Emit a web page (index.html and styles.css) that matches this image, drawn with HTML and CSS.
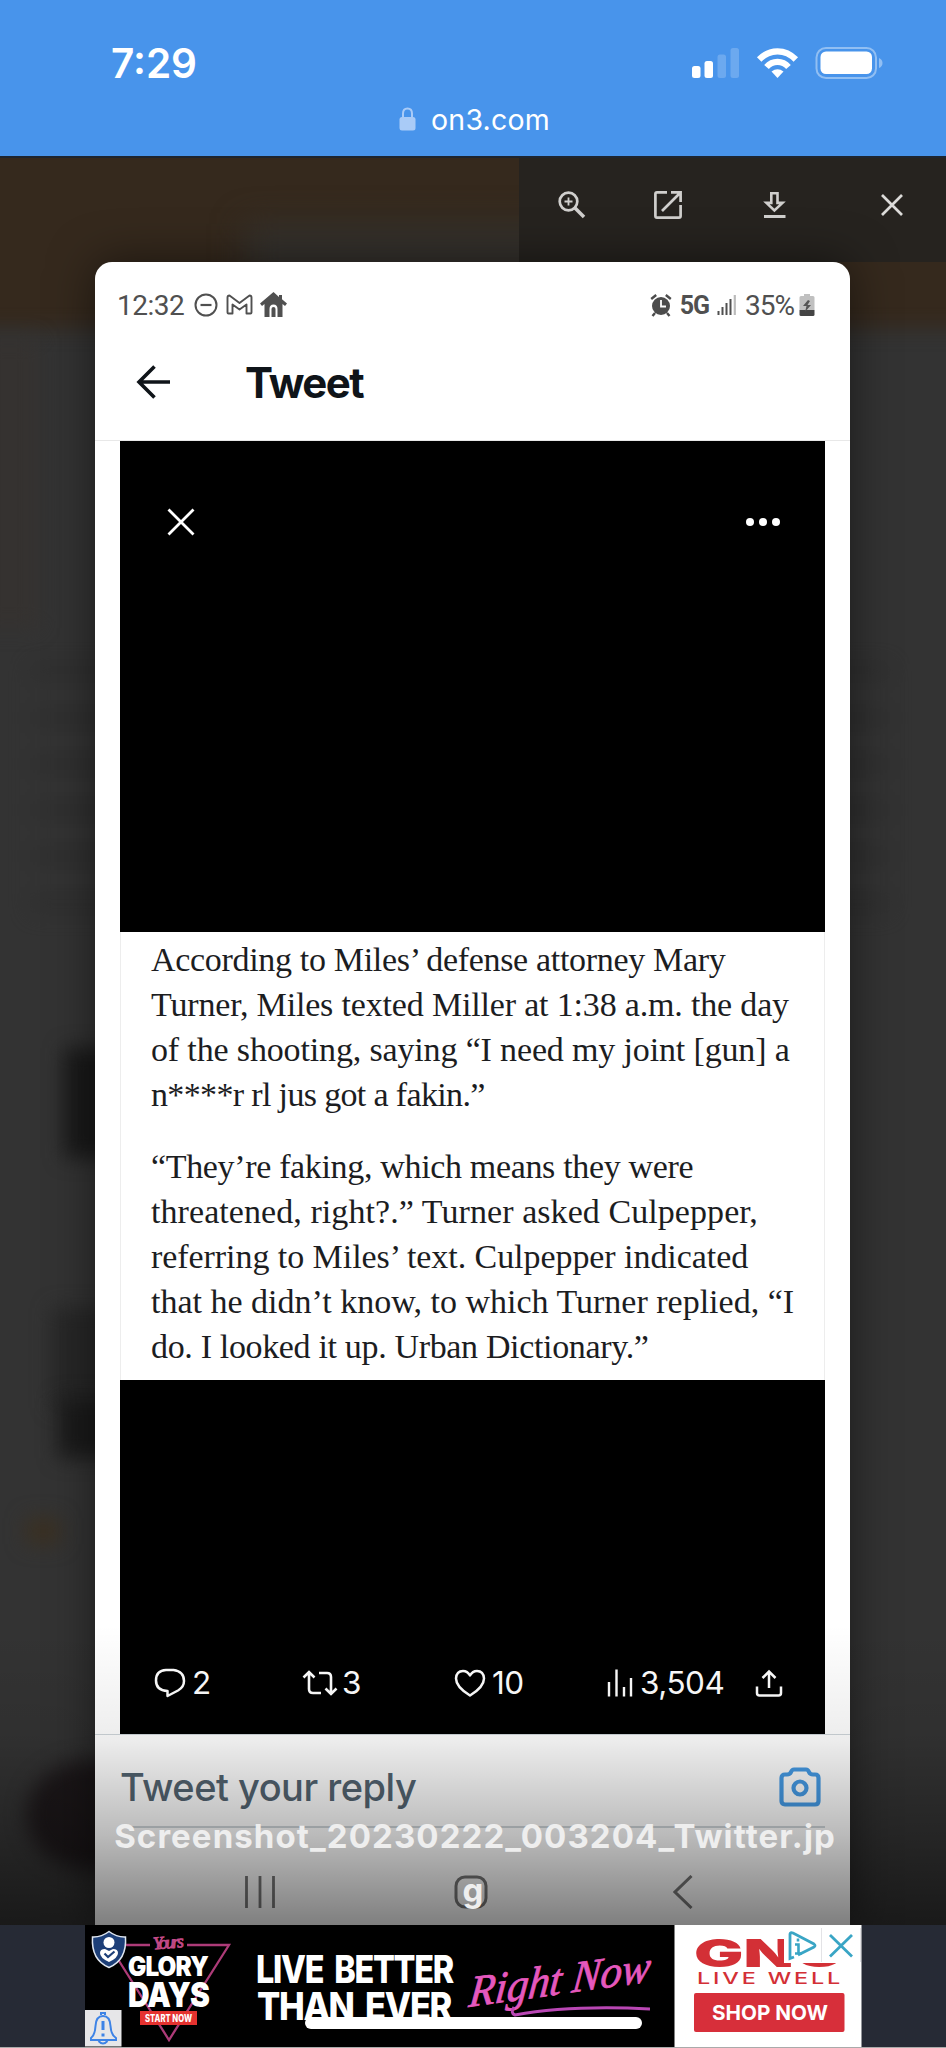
FILE: index.html
```
<!DOCTYPE html>
<html lang="en">
<head>
<meta charset="utf-8">
<title>on3.com</title>
<link rel="stylesheet" href="styles.css">
</head>
<body>
<div class="screen">
  <header class="browser">
    <div class="status">
      <span class="clock">7:29</span>
      <svg class="status-icons" width="192" height="32" viewBox="0 0 192 32">
        <g fill="#fff">
          <rect x="1" y="19" width="8.5" height="12" rx="2.5"/>
          <rect x="13.5" y="14" width="8.5" height="17" rx="2.5"/>
          <rect x="26.500" y="7.500" width="8.500" height="23.500" rx="2.500" opacity=".2"/>
          <rect x="39.500" y="1" width="8.500" height="30" rx="2.500" opacity=".2"/>
          <rect x="129.500" y="4.500" width="51.500" height="22.500" rx="5.500"/>
          <path d="M188 11v10q3.500-1.500 3.500-5t-3.500-5z" opacity=".4"/>
        </g>
        <rect x="125.500" y="1" width="59.500" height="30" rx="9.500" fill="none" stroke="#fff" stroke-width="2" opacity=".4"/>
        <g fill="none" stroke="#fff" stroke-width="6.200">
          <path d="M68.200 12.500Q76 4.300 86.500 4.300T104.800 12.500"/>
          <path d="M75.500 20Q80 14.900 86.500 14.900T97.500 20"/>
        </g>
        <path d="M80.500 24.500q6-4.500 12 0l-6 6.500z" fill="#fff"/>
      </svg>
    </div>
    <div class="address">
      <svg width="17" height="24" viewBox="0 0 17 24"><path d="M4 11V6.500Q4 1.500 8.500 1.500T13 6.500V11" fill="none" stroke="#a9cbf7" stroke-width="2"/><rect x="0.500" y="10" width="16" height="13.500" rx="2.500" fill="#a9cbf7"/></svg>
      <span>on3.com</span>
    </div>
  </header>

  <main class="page">
    <div class="backdrop">
      <i class="blot band"></i><i class="blot title-blot"></i>
      <i class="blot side"></i>
      <i class="blot thumb-a"></i><i class="blot thumb-b"></i><i class="blot thumb-c"></i>
      <i class="blot gold"></i><i class="blot avatar"></i>
      <i class="blot words"></i>
    </div>

    <nav class="toolbar">
      <svg width="28" height="28" viewBox="0 0 28 28" fill="none" stroke="#d0cfcd"><circle cx="10.500" cy="10.500" r="8.800" stroke-width="2.700"/><path d="M17 17l9 9" stroke-width="3.600"/><path d="M10.500 6.500v8M6.500 10.500h8" stroke-width="1.800"/></svg>
      <svg width="30" height="30" viewBox="0 0 30 30" fill="none" stroke="#d0cfcd" stroke-width="2.700"><path d="M14 2.400H4Q2.400 2.400 2.400 4V26Q2.400 27.600 4 27.600H26Q27.600 27.600 27.600 26V15"/><path d="M18 2.400h9.600V12M27 3L9 21"/></svg>
      <svg width="23" height="28" viewBox="0 0 23 28" fill="none" stroke="#d0cfcd"><path d="M8.300 2.300h6.200v9.600h5L11.400 19.500 3.400 11.900h4.900z" stroke-width="2.600"/><path d="M1 25.500h21.500" stroke-width="3"/></svg>
      <svg width="22" height="22" viewBox="0 0 22 22" fill="none" stroke="#dcdbd9" stroke-width="2.700"><path d="M1 1l20 20M21 1L1 21"/></svg>
    </nav>

    <article class="card">
      <div class="phone-status">
        <div class="group">
          <span class="ptime">12:32</span>
          <svg width="94" height="28" viewBox="0 0 94 28" fill="none" stroke="#505050">
            <circle cx="13" cy="14" r="10.500" stroke-width="2"/><path d="M7.500 14h11" stroke-width="2.200"/>
            <path d="M34.500 21.500V6.500q0-2 2-2L46.500 12l10-7.500q2 0 2 2V21.500q0 1-1 1h-4V13.500L46.500 18.500 39.500 13.500v9h-4q-1 0-1-1z" stroke-width="1.900" stroke-linejoin="round"/>
            <path d="M80.500 1L67 12.500l2 2.500 2.500-2V26h5V18q0-4.500 4-4.500t4 4.500v8h5V13l2.500 2 2-2.500-5-4.300V4h-3v2z" fill="#505050" stroke="none"/><path d="M78.500 26v-8q0-2 2-2t2 2v8z" fill="#505050" stroke="none"/>
          </svg>
        </div>
        <div class="group right-group">
          <svg width="22" height="24" viewBox="0 0 22 24"><circle cx="11" cy="13" r="9" fill="#4c4c4c"/><path d="M11 7v6.500h5" fill="none" stroke="#fff" stroke-width="1.800"/><path d="M1.200 6l5-4M20.800 6l-5-4M5 20l-2.500 3M17 20l2.500 3" stroke="#4c4c4c" stroke-width="2.400"/></svg>
          <b>5G</b>
          <svg class="sig" width="20" height="22" viewBox="0 0 20 22"><path d="M1.500 17v4M5.500 13v8M9.500 9v12M13.500 5v16" stroke="#505050" stroke-width="2"/><path d="M17.800 1v20" stroke="#bbb" stroke-width="2.200"/></svg>
          <span class="pct">35%</span>
          <svg width="16" height="24" viewBox="0 0 16 24"><path d="M5 1h6v2h3q1.500 0 1.500 1.500V17H.5V4.500Q.5 3 2 3h3z" fill="#c0c0c0"/><path d="M.5 17h15v4.500q0 1.500-1.500 1.500H2Q.5 23 .5 21.500z" fill="#444"/><path d="M9 7l-5 6h3.500L6 19l6-7H8.500L11 8z" fill="#555"/></svg>
        </div>
      </div>

      <div class="tweet-head">
        <svg width="34" height="34" viewBox="0 0 34 34" fill="none" stroke="#0f1419" stroke-width="3.600"><path d="M34 17H3M18.500 1.500L3 17l15.500 15.500"/></svg>
        <h1>Tweet</h1>
      </div>

      <div class="media">
        <div class="black-top">
          <svg width="28" height="28" viewBox="0 0 28 28" stroke="#fff" stroke-width="2.800"><path d="M1.500 1.500l25 25M26.500 1.500l-25 25"/></svg>
          <svg width="36" height="10" viewBox="0 0 36 10" fill="#fff"><circle cx="5" cy="5" r="4"/><circle cx="18" cy="5" r="4"/><circle cx="31" cy="5" r="4"/></svg>
        </div>
        <div class="quote">
          <p><span class="l1">According to Miles’ defense attorney Mary</span>
          <span class="l2">Turner, Miles texted Miller at 1:38 a.m. the day</span>
          <span class="l3">of the shooting, saying “I need my joint [gun] a</span>
          <span class="l4">n****r rl jus got a fakin.”</span></p>
          <p><span class="l5">“They’re faking, which means they were</span>
          <span class="l6">threatened, right?.” Turner asked Culpepper,</span>
          <span class="l7">referring to Miles’ text. Culpepper indicated</span>
          <span class="l8">that he didn’t know, to which Turner replied, “I</span>
          <span class="l9">do. I looked it up. Urban Dictionary.”</span></p>
        </div>
        <div class="black-bottom">
          <div class="action reply"><svg width="32" height="30" viewBox="0 0 32 30" fill="none" stroke="#fff" stroke-width="2.500"><path d="M12 2h7.500q10.500 1.500 10.500 11 0 6-6 9.500L13.500 28v-5Q2 22.500 2 12.500T12 2z" stroke-linejoin="round"/></svg><span>2</span></div>
          <div class="action retweet"><svg width="36" height="28" viewBox="0 0 36 28" fill="none" stroke="#fff" stroke-width="2.600"><path d="M1.500 8.500L7 3l5.500 5.500M7 3.500V20q0 4 4 4h8M34.500 19.500L29 25l-5.500-5.500M29 24.500V8q0-4-4-4h-8"/></svg><span>3</span></div>
          <div class="action like"><svg width="32" height="28" viewBox="0 0 32 28" fill="none" stroke="#fff" stroke-width="2.500"><path d="M16 26.500Q2 18 2 9.500 2.500 2 9 2q4.500 0 7 4.500Q18.500 2 23 2q6.500 0 7 7.500 0 8.500-14 17z" stroke-linejoin="round"/></svg><span>10</span></div>
          <div class="action views"><svg width="26" height="28" viewBox="0 0 26 28" stroke="#fff" stroke-width="2.400"><path d="M2 13v14.500M9.500.5v27M17 18v9.500M24 9v18.500"/></svg><span>3,504</span></div>
          <svg class="share" width="28" height="28" viewBox="0 0 28 28" fill="none" stroke="#fff" stroke-width="2.500"><path d="M14 19V2.500M7.500 9L14 2.500 20.500 9M2 17.500V24q0 2.500 2.500 2.500h19q2.500 0 2.500-2.500v-6.500"/></svg>
        </div>
      </div>

      <div class="reply-box">
        <span>Tweet your reply</span>
        <svg width="42" height="40" viewBox="0 0 42 40" fill="none" stroke="#459be6" stroke-width="4.200"><path d="M15 2.500h12q2 0 3 2.500t4 2.500h2Q39.500 7.500 39.500 11V34q0 3.500-3.500 3.500H6Q2.500 37.500 2.500 34V11Q2.500 7.500 6 7.500h2q3 0 4-2.500t3-2.500z"/><circle cx="21" cy="21" r="6.500"/></svg>
      </div>
      <div class="phone-nav">
        <svg width="30" height="34" viewBox="0 0 30 34" stroke="#777" stroke-width="2.800"><path d="M1.500 1v32M15 1v32M28.500 1v32"/></svg>
        <svg class="home" width="34" height="34" viewBox="0 0 34 34" fill="none" stroke="#777" stroke-width="3"><rect x="2" y="2" width="30" height="30" rx="9"/></svg>
        <svg width="20" height="34" viewBox="0 0 20 34" fill="none" stroke="#777" stroke-width="3"><path d="M18.500 1L2 17l16.500 16"/></svg>
      </div>
    </article>

    <div class="shade"></div>
    <div class="caption"><span class="cap-line">Screenshot_20230222_003204_Twitter.jp</span><span>g</span></div>
  </main>

  <footer class="ad">
    <svg width="777" height="122" viewBox="85 1925 777 122">
      <rect x="85" y="1925" width="590" height="122" fill="#000"/>
      <rect x="674.500" y="1925" width="187" height="122" fill="#fff"/>
      <path d="M126 1945H150M187 1945H229L169 2040 114 1953" fill="none" stroke="#ad3b78" stroke-width="2.300"/>
      <text x="153" y="1949" textLength="31" class="script small-script" transform="rotate(-5 160 1945)">Yours</text>
      <g class="heavy"><text x="128" y="1976" font-size="27" textLength="80" lengthAdjust="spacingAndGlyphs">GLORY</text>
      <text x="128" y="2007" font-size="34" textLength="81" lengthAdjust="spacingAndGlyphs">DAYS</text></g>
      <rect x="140" y="2011" width="57" height="14" fill="#e5322f"/>
      <text x="145" y="2022" class="start" textLength="47" lengthAdjust="spacingAndGlyphs">START NOW</text>
      <path d="M109 1931.500q8 6 16.500 5.500 1.500 23-16.500 30.500-18-7.500-16.500-30.500 8.500.5 16.500-5.500z" fill="#1d3f78" stroke="#dfe6f0" stroke-width="1.500"/>
      <circle cx="109" cy="1942.500" r="5.500" fill="#fff"/><path d="M100 1953q0-4 5-4l4 2 4-2q5 0 5 4 0 5-9 9-9-4-9-9z" fill="#fff"/><path d="M104.500 1953.500l3.500 3.500 6.500-5.500" fill="none" stroke="#1d3f78" stroke-width="2.200"/>
      <rect x="85" y="2010" width="36.500" height="36.500" fill="#e6e6e8"/>
      <path d="M91 2038q4-3 4.500-12 .5-10 7.500-10t7.500 10q.5 9 5.500 12v2H91zM98.500 2041q4.500 5 9 0M101 2015v-2h4v2" fill="none" stroke="#3d83e6" stroke-width="2"/><path d="M103 2021v9M103 2033.500v3" stroke="#3d83e6" stroke-width="3"/>
      <g class="heavy wide"><text x="256" y="1983" font-size="38.500" textLength="197" lengthAdjust="spacingAndGlyphs">LIVE BETTER</text>
      <text x="257" y="2020" font-size="38.500" textLength="194" lengthAdjust="spacingAndGlyphs">THAN EVER</text></g>
      <g transform="translate(468 2007) rotate(-8) skewX(-14)"><text class="script" x="0" y="0" font-size="44" textLength="183" lengthAdjust="spacingAndGlyphs">Right Now</text></g>
      <path d="M650 2009q-80-4-135 6-5-2-1-8" fill="none" stroke="#b947b4" stroke-width="3"/>
      <text class="gnc" x="694" y="1967" font-size="38" textLength="149" lengthAdjust="spacingAndGlyphs">GNC</text>
      <text class="well" x="697" y="1983.500" textLength="146" lengthAdjust="spacingAndGlyphs">LIVE WELL</text>
      <rect x="694" y="1993" width="150.500" height="39" rx="2" fill="#d72f3a"/>
      <text class="shop" x="712" y="2020" textLength="116" lengthAdjust="spacingAndGlyphs">SHOP NOW</text>
      <path d="M784 1925h77v38h-77z" fill="#fff"/><path d="M821.500 1928v34M860.500 1928v34" stroke="#e3e3e6"/>
      <path d="M794 1957l-4 1.500V1934q0-2 3-1l21 11q2 1.500 0 3l-16 8" fill="none" stroke="#39a5c5" stroke-width="2.800"/><path d="M795 1944.500h3.500v9M795 1953.500h7M798 1938.500v3" fill="none" stroke="#39a5c5" stroke-width="2.600"/>
      <path d="M830 1935l22 21.500M852 1935l-22 21.500" stroke="#39a5c5" stroke-width="2.800"/>
      <rect x="305" y="2017" width="337" height="12" rx="6" fill="#fff"/>
    </svg>
  </footer>
</div>
</body>
</html>
```
FILE: styles.css
```
* { box-sizing: border-box; }
body { margin: 0; background: #333; font-family: Inter, "Liberation Sans", sans-serif; }
svg { display: block; flex: none; }
.screen { width: 946px; height: 2048px; display: flex; flex-direction: column; overflow: hidden; }

.browser { height: 156px; background: #4894eb; color: #fff; flex: none; }
.status { height: 95px; display: flex; justify-content: space-between; padding: 47px 63px 0 111px; }
.clock { font-size: 40.5px; line-height: 34px; font-weight: 600; letter-spacing: 0; }
.address { display: flex; justify-content: center; align-items: center; gap: 15px; height: 48px; font-size: 28.5px; padding-left: 3px; letter-spacing: .2px; }

.page { position: relative; height: 1769px; flex: none; overflow: hidden; background: #333; border-top: 2px solid #1d2530; display: flex; flex-direction: column; align-items: center; }
.backdrop { position: absolute; inset: 0; }
.blot { position: absolute; display: block; filter: blur(10px); }
.band { left: -30px; right: -30px; top: -30px; height: 200px; background: #35291d; }
.title-blot { left: 245px; top: 66px; width: 330px; height: 60px; background: #34312d; filter: blur(16px); }
.side { left: -20px; top: 180px; width: 58px; height: 290px; background: #353230; }
.thumb-a { left: 64px; top: 890px; width: 60px; height: 110px; background: #191919; }
.thumb-b { left: 52px; top: 1150px; width: 60px; height: 100px; background: #272727; }
.thumb-c { left: 58px; top: 1240px; width: 60px; height: 60px; background: #1a1a1a; }
.gold { left: 26px; top: 1360px; width: 34px; height: 26px; background: #3a3022; }
.avatar { left: 26px; top: 1602px; width: 130px; height: 110px; border-radius: 50%; background: #1d181a; }
.words { left: 30px; top: 506px; width: 860px; height: 250px; background: repeating-linear-gradient(#2b2b2b 0 16px, #343434 16px 46px); opacity: .5; }

.toolbar { position: relative; align-self: flex-end; width: 427px; height: 104px; flex: none; background: #26231f; display: flex; align-items: center; padding: 0 43px 10px 39px; justify-content: space-between; }
.toolbar svg:nth-child(2) { margin-left: -13px; }
.toolbar svg:nth-child(3) { margin-right: 15px; }

.card { position: relative; width: 755px; height: 1664px; flex: none; background: #fff; border-radius: 17px 17px 0 0; box-shadow: 0 0 46px rgba(0,0,0,.5); display: flex; flex-direction: column; margin-right: 1px; }
.phone-status { display: flex; justify-content: space-between; align-items: center; height: 46px; margin-top: 20px; padding: 0 35px 0 22px; font-family: Roboto, sans-serif; font-size: 28px; color: #505050; }
.group { display: flex; align-items: center; gap: 9px; }
.ptime { letter-spacing: -.5px; }
.right-group { gap: 8px; }
.right-group b { font-size: 25px; letter-spacing: -1px; }
.pct { letter-spacing: -1px; margin-right: -3px; }
.tweet-head { height: 113px; border-bottom: 1px solid #e8e8e8; display: flex; align-items: center; padding: 0 0 5px 41px; gap: 75px; }
.tweet-head h1 { margin: 0; font-size: 42px; font-weight: 700; color: #0f1419; letter-spacing: -1.6px; padding-top: 1px; }
.media { width: 705px; margin-left: 25px; flex: none; }
.black-top { height: 491px; background: #000; display: flex; justify-content: space-between; align-items: flex-start; padding: 67px 44px 0 47px; }
.black-top svg + svg { margin-top: 9px; }
.quote { height: 448px; border: 1px solid #ededed; border-width: 0 1px; padding: 5px 0 0 30px; font: 34px/45px "Liberation Serif", serif; color: #1c1d1f; }
.quote p { margin: 0 0 27px; }
.quote span { display: block; width: max-content; white-space: nowrap; }
.l1 { letter-spacing: -.32px; }
.l2 { letter-spacing: -.17px; }
.l3 { letter-spacing: -.15px; }
.l4 { letter-spacing: -.65px; }
.l5 { letter-spacing: -.34px; }
.l6 { letter-spacing: .07px; }
.l7 { letter-spacing: -.06px; }
.l9 { letter-spacing: -.34px; }
.black-bottom { height: 354px; background: #000; color: #fff; display: flex; padding: 0 41px 37px 34px; align-items: flex-end; }
.action { display: flex; align-items: center; gap: 6px; height: 28px; font-size: 31.5px; line-height: 28px; letter-spacing: -.5px; }
.reply { width: 148px; }
.retweet { width: 152px; gap: 4px; }
.like { width: 153px; }
.views { width: 148px; gap: 7px; }
.reply-box { height: 94px; flex: none; border-top: 1px solid #cfd6da; display: flex; align-items: center; justify-content: space-between; padding: 11px 29px 0 25px; font-size: 38px; font-weight: 550; color: #536471; letter-spacing: -.5px; background: linear-gradient(#cfd6da, #cfd6da) 25px 100% / 705px 2px no-repeat; }
.phone-nav { display: flex; align-items: center; justify-content: space-between; height: 98px; padding: 30px 157px 0 150px; }
.home { margin-right: 6px; }
.shade { position: absolute; left: 0; right: 0; bottom: 0; height: 300px; background: linear-gradient(rgba(0,0,0,0), rgba(0,0,0,.07) 38%, rgba(0,0,0,.27) 70%, rgba(0,0,0,.5)); }
.caption { position: absolute; left: 0; right: 0; bottom: 8px; text-align: center; color: #eee; font-size: 33px; line-height: 54px; font-weight: 700; display: flex; flex-direction: column; }
.cap-line { letter-spacing: 1.1px; padding-left: 4px; }

.ad { flex: 1; background: #262a35; border-bottom: 1px solid #aaa; display: flex; justify-content: center; }
.heavy { fill: #fff; font-family: Inter, sans-serif; font-weight: 900; letter-spacing: -1px; }
.wide { font-weight: 800; word-spacing: 6px; letter-spacing: -1.5px; }
.script { fill: #e558bd; font-family: "Liberation Serif", serif; font-style: italic; font-weight: 400; stroke: #e558bd; stroke-width: .8; }
.small-script { font-size: 18px; fill: #c34a87; stroke: #c34a87; }
.start { fill: #fff; font: 800 10px Inter, sans-serif; }
.gnc { fill: #d33036; font-family: Inter, sans-serif; font-weight: 900; }
.well { fill: #d33036; font: 500 16.5px Inter, sans-serif; letter-spacing: 2px; }
.shop { fill: #fff; font: 700 20px Inter, sans-serif; }
```
